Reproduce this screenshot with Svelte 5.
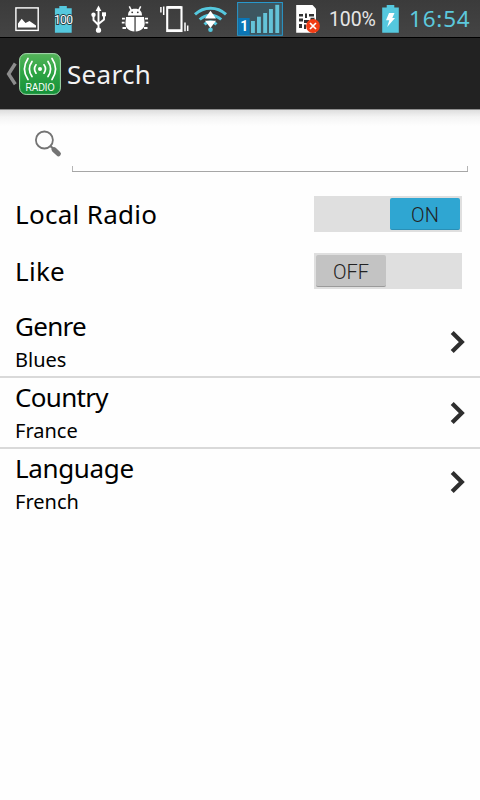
<script>
  let toggles = [
    { label: "Local Radio", on: true },
    { label: "Like", on: false },
  ];

  const filters = [
    { name: "Genre", value: "Blues" },
    { name: "Country", value: "France" },
    { name: "Language", value: "French" },
  ];

  let query = "";

  // x, top of each signal bar
  const bars = [
    [251, 21],
    [257, 16.7],
    [263.2, 13],
    [269, 9],
    [275.3, 4.8],
  ];

  const flip = (toggle) => {
    toggle.on = !toggle.on;
    toggles = toggles;
  };
</script>

<div class="screen">
  <div class="status-bar">
    <!-- picture -->
    <svg width="45" height="37" viewBox="0 0 45 37">
      <rect x="15.9" y="7.9" width="22.3" height="22.5" fill="none" stroke="#fff" stroke-width="1.4" />
      <path d="M18 27.5V23.5L21.7 18.7L25.5 23L29.5 21L36 25.5V27.5Z" fill="#fff" />
    </svg>
    <!-- battery level -->
    <svg width="37" height="37" viewBox="45 0 37 37">
      <path d="M59.3 6H66.8V8.3H71.7V32.7H54.9V8.3H59.3Z" fill="#55c8de" />
      <text class="level" x="63.2" y="24.3" text-anchor="middle">100</text>
    </svg>
    <!-- usb -->
    <svg width="33" height="37" viewBox="82 0 33 37">
      <g fill="none" stroke="#fff" stroke-width="1.9">
        <path d="M98.5 9V30M93.5 15V20L98.5 25M104 14V19.5L98.5 24" />
      </g>
      <path d="M98.5 5.5L101.4 11H95.6Z" fill="#fff" />
      <circle cx="98.5" cy="30.2" r="2.6" fill="#fff" />
      <circle cx="93.5" cy="14.8" r="2.2" fill="#fff" />
      <rect x="102" y="12.3" width="4" height="4" fill="#fff" />
    </svg>
    <!-- debug bug -->
    <svg width="40" height="37" viewBox="115 0 40 37">
      <path d="M128 15.5C128 11 130.5 8.7 135 8.7S142 11 142 15.5Z" fill="#fff" />
      <path d="M131.3 10.3L129.3 6.3M138.7 10.3L140.7 6.3" stroke="#fff" stroke-width="1.5" />
      <circle cx="132.2" cy="12.3" r="0.9" fill="#3a3a3a" />
      <circle cx="137.8" cy="12.3" r="0.9" fill="#3a3a3a" />
      <path d="M126 17H134.4V31.5C129 31 125.4 28.3 125.4 23.5ZM135.7 17H144L144.7 23.5C144.7 28.3 141 31 135.7 31.5Z" fill="#fff" />
      <path d="M122 18.6H124.9M121.8 22.7H124.6M122.5 28H126M145 18.6H148M145.5 22.7H148.2M144 28H147.5" stroke="#fff" stroke-width="1.8" />
    </svg>
    <!-- vibrate -->
    <svg width="36" height="37" viewBox="155 0 36 37">
      <rect x="167.2" y="7.3" width="14.3" height="23.7" fill="none" stroke="#fff" stroke-width="2.1" />
      <path d="M167.2 7.4H181.5M167.2 30.6H181.5" stroke="#fff" stroke-width="2.8" />
      <path d="M160.9 7V12.5M163.7 6.5V15M185 22.5V31.3M187.7 25.5V31" stroke="#fff" stroke-width="1.5" />
    </svg>
    <!-- wifi -->
    <svg width="42" height="37" viewBox="191 0 42 37">
      <g fill="none" stroke="#55c8de" stroke-width="3">
        <path d="M195 14.3C204 6.2 217 6.2 226 14.3" />
        <path d="M199.7 19.5C206 13.7 215 13.7 221.2 19.5" />
        <path d="M204.5 24.3C208 21 213 21 216.5 24.3" />
      </g>
      <circle cx="210.5" cy="29.8" r="2.3" fill="#55c8de" />
      <path d="M210.5 10.7L216 18.6H205ZM205 20.8H216L210.5 28Z" fill="#fff" />
    </svg>
    <!-- signal -->
    <svg width="56" height="37" viewBox="233 0 56 37">
      <rect x="237.6" y="2.5" width="44.8" height="32.8" fill="#3d5660" stroke="#2898cc" />
      {#each bars as [x, top]}
        <rect {x} y={top} width="3.9" height={33 - top} fill="#64c3d8" />
      {/each}
      <rect x="238.3" y="18" width="11.4" height="16.8" fill="#0a76b6" />
      <text class="sim" x="244.2" y="30.8" text-anchor="middle">1</text>
    </svg>
    <!-- missing sim -->
    <svg width="36" height="37" viewBox="289 0 36 37">
      <path d="M296.2 5H312.5L316 8.7V32.8H296.2Z" fill="#fff" />
      <path d="M299 14H303V16.5H299ZM305 13.5H307V18H305ZM309 14H314V16.5H309ZM299 18.5H303V21.5H299ZM304 20H309V23H304ZM310.5 17.8H314.5V20H310.5ZM299 24H302V28H299ZM304 24.5H306V29H304Z" fill="#333" />
      <circle cx="313" cy="26" r="6.9" fill="#f03c14" />
      <path d="M310 23L316 29M316 23L310 29" stroke="#fff" stroke-width="1.7" />
    </svg>
    <span class="percent">100%</span>
    <!-- charging -->
    <svg width="26" height="37" viewBox="378 0 26 37">
      <path d="M386.7 5H394.3V7.4H398.8V32.8H382.2V7.4H386.7Z" fill="#55c8de" />
      <path d="M389 13H394.5L392.3 18H395L387.2 27L389.3 20.3H386Z" fill="#fff" />
    </svg>
    <span class="clock">16:54</span>
  </div>

  <header>
    <svg class="back" width="13" height="26" viewBox="0 0 13 26">
      <path d="M9.3 2.5L2.6 13L9.3 23.3" fill="none" stroke="#8d8d8d" stroke-width="3.4" />
    </svg>
    <svg class="logo" width="42" height="42" viewBox="0 0 42 42">
      <defs>
        <linearGradient id="green" x1="0" y1="0" x2="0" y2="1">
          <stop offset="0" stop-color="#55b45a" />
          <stop offset="0.45" stop-color="#2fa544" />
          <stop offset="1" stop-color="#15913a" />
        </linearGradient>
      </defs>
      <rect x="0.6" y="0.6" width="40.8" height="40.8" rx="6.5" fill="url(#green)" stroke="#a8dcb0" stroke-width="1" />
      <circle cx="21" cy="16" r="2" fill="#fff" />
      <g fill="none" stroke="#fff" stroke-width="1.7" stroke-linecap="round">
        <path d="M17 11.8Q14 16 17 20.2M25 11.8Q28 16 25 20.2" />
        <path d="M13 8.5Q7.8 16 13 23.5M29 8.5Q34.2 16 29 23.5" />
        <path d="M9 5.5Q1.8 16 9 26.5M33 5.5Q40.2 16 33 26.5" />
      </g>
      <text x="21" y="37.8" text-anchor="middle" textLength="29" lengthAdjust="spacingAndGlyphs">RADIO</text>
    </svg>
    <h1>Search</h1>
  </header>

  <div class="search">
    <svg width="30" height="30" viewBox="0 0 30 30">
      <circle cx="10.4" cy="10" r="8.5" fill="none" stroke="#747474" stroke-width="1.8" />
      <path d="M16.2 15.8L19.5 19" stroke="#747474" stroke-width="2.2" />
      <path d="M20 19.6L24.4 23.8" stroke="#747474" stroke-width="5" stroke-linecap="round" />
    </svg>
    <div class="field">
      <input type="text" aria-label="Search" bind:value={query} />
    </div>
  </div>

  <div class="toggles">
    {#each toggles as toggle}
      <div class="toggle-row">
        <span class="label">{toggle.label}</span>
        <button class="switch" class:on={toggle.on} on:click={() => flip(toggle)}>
          <span class="thumb">{toggle.on ? "ON" : "OFF"}</span>
        </button>
      </div>
    {/each}
  </div>

  <ul>
    {#each filters as filter}
      <li>
        <div>
          <div class="label">{filter.name}</div>
          <div class="value">{filter.value}</div>
        </div>
        <svg width="16" height="24" viewBox="0 0 16 24">
          <path d="M2.2 2.4L11.8 12L2.2 21.6" fill="none" stroke="#2e2e2e" stroke-width="4.2" />
        </svg>
      </li>
    {/each}
  </ul>
</div>

<style>
  :global(body) {
    background: #fefefe;
  }
  .screen {
    height: 800px;
    overflow: hidden;
    background: #fefefe;
    color: #000;
    font-family: "Noto Sans", sans-serif;
  }
  .status-bar {
    display: flex;
    height: 37px;
    background: linear-gradient(#3b3b3b, #444);
    border-bottom: 1px solid #000;
  }
  .status-bar svg {
    flex: none;
  }
  .level {
    font: 12px Roboto, sans-serif;
    letter-spacing: -0.6px;
    fill: #fff;
    stroke: #24424a;
    stroke-width: 2px;
    paint-order: stroke;
  }
  .sim {
    font: bold 14px Roboto, sans-serif;
    fill: #fff;
  }
  .percent {
    width: 49px;
    padding-left: 4px;
    font: 19.5px/39px Roboto, sans-serif;
    letter-spacing: -0.1px;
    color: #e6e6e6;
  }
  .clock {
    padding-left: 5px;
    font-size: 22.5px;
    line-height: 38px;
    letter-spacing: 0.8px;
    color: #5cc8dc;
  }
  header {
    display: flex;
    align-items: center;
    height: 71px;
    padding-left: 6px;
    background: #222;
    border-bottom: 1px solid #8f8f8f;
  }
  .logo text {
    font: 10px "Liberation Sans", sans-serif;
    fill: #fff;
  }
  h1 {
    margin: 0 0 0 6px;
    font-size: 26px;
    font-weight: normal;
    line-height: 36px;
    letter-spacing: 0.3px;
    color: #f3f3f3;
  }
  .search {
    display: flex;
    align-items: flex-end;
    height: 62px;
    padding: 0 12px 0 34px;
    background: linear-gradient(#dedede, #f4f4f4 7px, #fefefe 16px);
  }
  .search svg {
    margin: 0 8px 12px 0;
  }
  .field {
    flex: 1;
    height: 39px;
    border-bottom: 1px solid #a6a6a6;
    background:
      linear-gradient(#b5b5b5, #b5b5b5) left bottom / 1px 5px no-repeat,
      linear-gradient(#b5b5b5, #b5b5b5) right bottom / 1px 5px no-repeat;
  }
  input {
    box-sizing: border-box;
    width: 100%;
    height: 38px;
    padding: 0 8px;
    border: none;
    outline: none;
    background: none;
    font: inherit;
    font-size: 24px;
  }
  .toggles {
    padding-top: 13px;
  }
  .toggle-row {
    display: flex;
    align-items: center;
    justify-content: space-between;
    height: 57px;
    padding: 0 18px 0 15px;
  }
  .label {
    font-size: 26px;
    line-height: 36px;
    letter-spacing: 0.3px;
  }
  .switch {
    display: flex;
    box-sizing: border-box;
    width: 148px;
    height: 36px;
    padding: 2px;
    border: none;
    background: #dfdfdf;
    font: 300 20px Roboto, sans-serif;
    color: #222;
  }
  .thumb {
    box-sizing: border-box;
    width: 70px;
    height: 32px;
    border-bottom: 1px solid #9a9a9a;
    border-radius: 2px;
    background: #c3c3c3;
    line-height: 35px;
    text-align: center;
  }
  .switch.on {
    justify-content: flex-end;
  }
  .on .thumb {
    background: #2fa6d2;
    border-color: #2a8fb6;
  }
  ul {
    margin: 0;
    padding: 8px 0 0;
    list-style: none;
  }
  li {
    display: flex;
    justify-content: space-between;
    align-items: center;
    box-sizing: border-box;
    height: 71px;
    padding: 0 14px 0 15px;
    border-bottom: 2px solid #d9d9d9;
  }
  li .label {
    margin: -2px 0 2px;
    letter-spacing: -0.7px;
  }
  li:last-child {
    height: 69px;
    border-bottom: none;
  }
  li:last-child .label {
    letter-spacing: -0.35px;
  }
  li:last-child svg {
    margin-bottom: 4px;
  }
  .value {
    font-size: 20px;
    line-height: 28px;
  }
</style>
